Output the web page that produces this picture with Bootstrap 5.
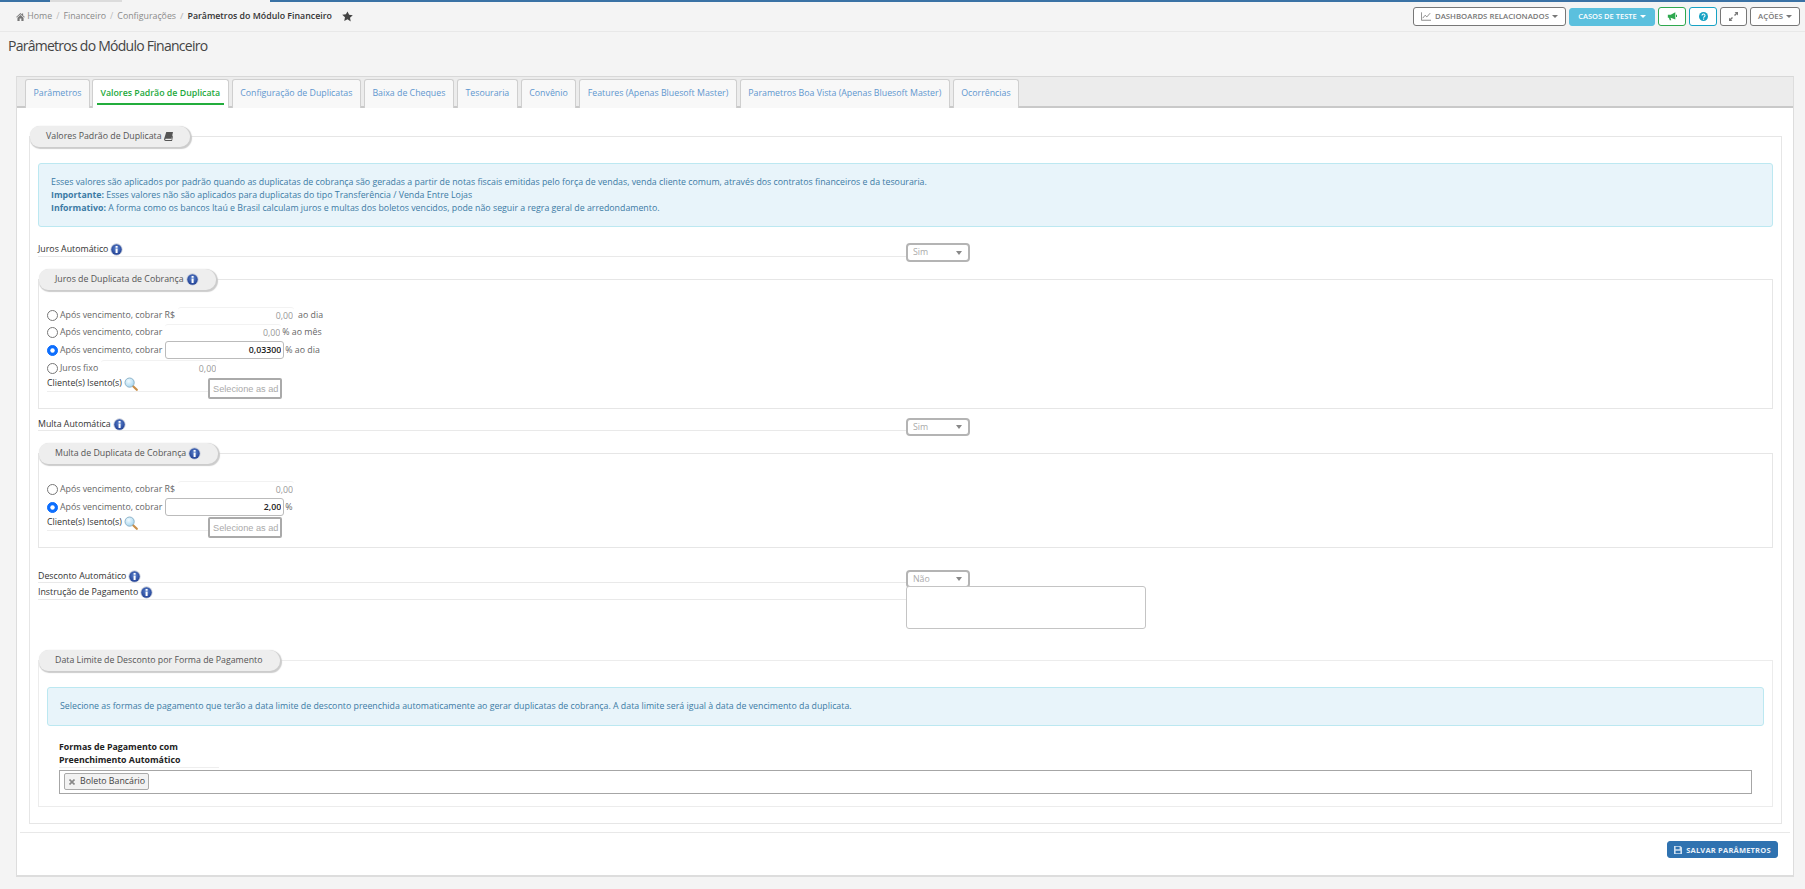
<!DOCTYPE html>
<html lang="pt-BR">
<head>
    <meta charset="UTF-8">
    <meta name="viewport" content="width=device-width, initial-scale=1.0">
    <title>Parâmetros do Módulo Financeiro</title>
    <link href="https://cdn.jsdelivr.net/npm/bootstrap@5.3.3/dist/css/bootstrap.min.css" rel="stylesheet">
    <script src="https://cdn.jsdelivr.net/npm/bootstrap@5.3.3/dist/js/bootstrap.bundle.min.js"></script>
    <style>
        html, body { height: 889px; overflow: hidden; }
        body { background: #f4f4f4; font-family: "Open Sans", sans-serif; font-size: 8.8px; line-height: 13px; color: #333; }

        /* faixa do topo */
        .faixa-topo { height: 2px; background: #3a72a5; }
        .faixa-topo span { height: 2px; background: #dcdcdc; }
        .faixa-a { margin-left: 50px; width: 36px; }
        .faixa-b { width: 36px; }
        .faixa-c { width: 148px; background: #f4f4f4 !important; }

        .barra-topo { height: 30px; border-bottom: 1px solid #e8e8e8; padding: 0 5px 0 16px; }
        .breadcrumb { font-size: 8.8px; margin: 0; --bs-breadcrumb-divider-color: #bbb; --bs-breadcrumb-item-padding-x: 4px; }
        .breadcrumb a { color: #8a8a8a; text-decoration: none; }
        .breadcrumb .active { color: #333; font-weight: 600; }
        .estrela { margin-left: 10px; }

        .btn-topo { font-size: 7.8px; line-height: 11px; font-weight: 600; padding: 3px 6px; border: 1px solid #777; border-radius: 3px; background: #fff; color: #777; height: 19px; white-space: nowrap; display: inline-flex; align-items: center; justify-content: center; }
        .btn-topo:hover { background: #fff; color: #777; }
        .btn-topo.dropdown-toggle::after { border-top-width: 3px; border-left-width: 3px; border-right-width: 3px; margin-left: 3px; vertical-align: 1px; }
        .btn-dash { width: 153px; margin-right: 3px; }
        .btn-casos { width: 86px; height: 18px; margin-right: 3px; background: #5bc0de; border-color: #5bc0de; color: #fff; font-size: 7.5px; }
        .btn-casos:hover { background: #5bc0de; color: #fff; }
        .btn-icone { width: 28px; margin-right: 3px; padding: 0; }
        .btn-verde { border-color: #2fa84f; }
        .btn-ciano { border-color: #17a2c4; }
        .btn-expandir { width: 27px; }
        .btn-acoes { width: 50px; }

        .titulo-pagina { font-size: 14px; line-height: 20px; font-weight: 400; letter-spacing: -.74px; margin: 4px 0 20px 8px; color: #444; }

        /* painel */
        .painel { margin: 0 11px 0 16px; height: 801px; background: #fff; border: 1px solid #ddd; border-top-color: #d8d8d8; border-bottom-width: 2px; }
        .nav-abas { background: #ececec; height: 31px; padding: 2px 0 0 8px; border-bottom: 2px solid #c9c9c9; flex-wrap: nowrap; gap: 3px; }
        .nav-abas .nav-link { height: 29px; font-size: 8.8px; line-height: 13px; color: #5f97cf; background: #f8f8f8; border: 1px solid #cfcfcf; border-bottom: 0; border-radius: 3px 3px 0 0; padding: 7px 7.5px 0; white-space: nowrap; }
        .nav-abas .nav-link.active { color: #23a93c; font-weight: 600; background: #fff; position: relative; margin-left: -1px; }
        .nav-abas .nav-link.active::after { content: ""; position: absolute; left: 4px; right: 4px; bottom: 3px; height: 2px; background: #23ad3c; }

        /* caixas com legenda */
        .caixa { border: 1px solid #e6e6e6; }
        .caixa-externa { margin: 28px 11px 0 12px; height: 688px; padding: 0 8px; }
        .caixa-juros { height: 130px; margin-top: 17px; padding: 0 8px; }
        .caixa-multa { height: 95px; margin-top: 17px; padding: 0 8px; }
        .caixa-data { height: 147px; margin-top: 31px; padding: 0 8px; border-color: #ececec; }
        .pilula { display: flex; align-items: center; width: fit-content; height: 21px; margin: -11px 0 0 -8px; padding: 0 17px 0 16px; background: #eee; border-radius: 9px 11px 10px 9px; box-shadow: 1px 1px 1px 1px #ccc; color: #555; gap: 2px; }

        .aviso { padding: 12px; margin: 0; font-size: 8.8px; line-height: 13px; background: #e8f4fa; border: 1px solid #bce8f1; border-radius: 3px; color: #3c7ba5; }
        .aviso-a { margin-top: 16px; height: 64px; }
        .aviso-b { height: 39px; margin-top: 16px; }

        .linha-campo { display: flex; align-items: flex-start; }
        .rotulo { height: 14px; border-bottom: 1px solid #e9e9e9; display: flex; align-items: center; gap: 2px; color: #333; white-space: nowrap; }
        .rotulo-largo { width: 868px; }
        .seletor { width: 64px; height: 19px; padding: 0 5px; font-size: 8.8px; color: #aaa; border: 2px solid #b4b4b4; border-radius: 4px; background: #fff url("data:image/svg+xml,%3Csvg xmlns='http://www.w3.org/2000/svg' width='6' height='4'%3E%3Cpath d='M0 0h6L3 4z' fill='%23888'/%3E%3C/svg%3E") no-repeat right 6px center; appearance: none; font-family: "Open Sans", sans-serif; }
        .juros-auto { margin-top: 16px; }
        .multa-auto { margin-top: 9px; }
        .multa-auto .seletor { height: 18px; }
        .multa-auto .rotulo { height: 13px; }
        .desc-auto { margin-top: 22px; }
        .desc-auto .seletor { height: 18px; }
        .desc-auto .rotulo { height: 13px; }
        .instrucao { margin-top: -2px; }
        .area-instrucao { width: 240px; height: 43px; border: 1px solid #c4c4c4; border-radius: 3px; resize: none; display: block; background: #fff; }

        .radios { margin-top: 17px; }
        .opcao { display: flex; align-items: center; height: 17px; white-space: nowrap; color: #666; }
        .opcao-alta { height: 18px; }
        .opcao .form-check-input { width: 11px; height: 11px; margin: 0 2px 0 0; border-color: #777; flex: none; }
        .opcao .form-check-input:checked { background-color: #0d6efd; border-color: #0d6efd; }
        .valor { width: 116px; height: 17px; margin-left: 3px; border: 0; border-top: 1px solid #f2f2f2; border-radius: 3px; text-align: right; padding: 0 1px 0 0; font-size: 8.8px; color: #999; background: #fff; font-family: "Open Sans", sans-serif; }
        .valor-ativo { width: 119px; height: 18px; border: 1px solid #bbb; color: #222; font-weight: 600; padding-right: 2px; }
        .sufixo { color: #666; margin-left: 1px; }
        .sufixo-dia { margin-left: 4px; }

        .isentos { display: flex; align-items: flex-start; }
        .rotulo-isento { width: 161px; height: 15px; border-bottom: 1px solid #eee; display: flex; align-items: flex-start; gap: 2px; }
        .caixa-selecao { width: 74px; height: 21px; margin-top: 1px; border: 2px solid #aaa; border-radius: 2px; font-family: "Liberation Sans", sans-serif; font-size: 9.2px; color: #aaa; padding: 3px; overflow: hidden; white-space: nowrap; background: #fff; }

        .rotulo-formas { width: 160px; margin: 15px 0 0 12px; height: 27px; border-bottom: 1px solid #eee; font-weight: 700; color: #222; line-height: 13px; }
        .caixa-multipla { margin: 2px 0 0 12px; width: 1693px; height: 24px; border: 1px solid #a6a6a6; padding: 2px 4px; background: #fff; }
        .etiqueta { display: inline-flex; align-items: center; gap: 5px; width: 85px; height: 17px; padding: 0 4px; border: 1px solid #aaa; border-radius: 2px; background: #f2f2f2; color: #444; white-space: nowrap; }
        .etiqueta svg { flex: none; }

        .rodape-painel { margin: 8px 3px 0 3px; border-top: 1px solid #e8e8e8; padding: 8px 12px 0 0; }
        .btn-salvar { width: 111px; height: 17px; padding: 0; background: #2f72b0; border: 1px solid #2f72b0; border-radius: 3px; color: #e8f0f8; font-size: 7.5px; line-height: 10px; font-weight: 700; display: flex; align-items: center; justify-content: center; gap: 4px; letter-spacing: .2px; }
        .btn-salvar:hover { background: #2f72b0; color: #e8f0f8; }
    </style>
</head>
<body>

<svg width="0" height="0" class="d-block position-absolute">
    <defs>
        <radialGradient id="azulInfo" cx="50%" cy="40%" r="60%">
            <stop offset="0" stop-color="#5f86cf"/>
            <stop offset="1" stop-color="#1f3f94"/>
        </radialGradient>
        <radialGradient id="vidro" cx="40%" cy="35%" r="70%">
            <stop offset="0" stop-color="#f2fbff"/>
            <stop offset="1" stop-color="#a3d4ef"/>
        </radialGradient>
        <symbol id="icoInfo" viewBox="0 0 14 14">
            <circle cx="7" cy="7" r="6.6" fill="#c9cfdc"/>
            <circle cx="7" cy="7" r="5.6" fill="url(#azulInfo)"/>
            <rect x="6" y="6" width="2.2" height="4.8" fill="#fff"/>
            <rect x="6" y="3.2" width="2.2" height="1.9" fill="#fff"/>
        </symbol>
        <symbol id="icoLupa" viewBox="0 0 14 14">
            <path d="M8.6 8.8l4.2 4" stroke="#c98f4a" stroke-width="2.2" stroke-linecap="round"/>
            <circle cx="5.6" cy="5.6" r="4.6" fill="url(#vidro)" stroke="#8fb4c9"/>
        </symbol>
    </defs>
</svg>

<div class="faixa-topo d-flex">
    <span class="faixa-a"></span><span class="faixa-b"></span><span class="faixa-c"></span>
</div>

<div class="barra-topo d-flex align-items-center justify-content-between">
    <div class="d-flex align-items-center">
        <ol class="breadcrumb">
            <li class="breadcrumb-item">
                <svg width="9" height="8" viewBox="0 0 12 11" fill="#777"><path d="M6 0L0 5.4l.7.8L6 1.6l5.3 4.6.7-.8L9.6 3.300V.6H8v1.300zM1.800 6.600V11h3V7.600h2.400V11h3V6.600L6 2.900z"/></svg>
                <a href="#">Home</a>
            </li>
            <li class="breadcrumb-item"><a href="#">Financeiro</a></li>
            <li class="breadcrumb-item"><a href="#">Configurações</a></li>
            <li class="breadcrumb-item active">Parâmetros do Módulo Financeiro</li>
        </ol>
        <svg class="estrela" width="11" height="11" viewBox="0 0 20 20" fill="#444"><path d="M10 .8l2.900 6.200 6.700.8-5 4.600 1.300 6.700L10 15l-5.900 3.100 1.300-6.700-5-4.600 6.700-.8z"/></svg>
    </div>
    <div class="d-flex align-items-center">
        <button type="button" class="btn btn-topo btn-dash dropdown-toggle">
            <svg class="me-1" width="10" height="9" viewBox="0 0 12 10" fill="none" stroke="#777"><path d="M.5 0v9.500H12M2 7l3-3.500 2 2L11 1"/></svg>DASHBOARDS RELACIONADOS
        </button>
        <button type="button" class="btn btn-topo btn-casos dropdown-toggle">CASOS DE TESTE</button>
        <button type="button" class="btn btn-topo btn-icone btn-verde">
            <svg width="10" height="9" viewBox="0 0 12 10" fill="#2fa84f"><path d="M1 3h3.500L10 0v8.500L4.500 6.500H4.200l.9 3H3.300l-1-3H1zM10.800 3H12v2.500h-1.200z"/></svg>
        </button>
        <button type="button" class="btn btn-topo btn-icone btn-ciano">
            <svg width="9" height="9" viewBox="0 0 12 12"><circle cx="6" cy="6" r="6" fill="#17a2c4"/><path d="M4 4.600a2 2 0 1 1 3.100 1.700c-.7.4-1 .7-1 1.500" fill="none" stroke="#fff" stroke-width="1.400"/><rect x="5.300" y="8.600" width="1.600" height="1.600" fill="#fff"/></svg>
        </button>
        <button type="button" class="btn btn-topo btn-icone btn-expandir">
            <svg width="9" height="9" viewBox="0 0 12 12" fill="#777"><path d="M7.500 0H12v4.500L10.400 2.900 8 5.300 6.700 4 9.100 1.600zM4.500 12H0V7.500l1.600 1.600L4 6.700 5.300 8 2.900 10.400z"/></svg>
        </button>
        <button type="button" class="btn btn-topo btn-acoes dropdown-toggle">AÇÕES</button>
    </div>
</div>

<h1 class="titulo-pagina">Parâmetros do Módulo Financeiro</h1>

<div class="painel">
    <ul class="nav nav-abas">
        <li class="nav-item"><a class="nav-link" href="#">Parâmetros</a></li>
        <li class="nav-item"><a class="nav-link active" href="#">Valores Padrão de Duplicata</a></li>
        <li class="nav-item"><a class="nav-link" href="#">Configuração de Duplicatas</a></li>
        <li class="nav-item"><a class="nav-link" href="#">Baixa de Cheques</a></li>
        <li class="nav-item"><a class="nav-link" href="#">Tesouraria</a></li>
        <li class="nav-item"><a class="nav-link" href="#">Convênio</a></li>
        <li class="nav-item"><a class="nav-link" href="#">Features (Apenas Bluesoft Master)</a></li>
        <li class="nav-item"><a class="nav-link" href="#">Parametros Boa Vista (Apenas Bluesoft Master)</a></li>
        <li class="nav-item"><a class="nav-link" href="#">Ocorrências</a></li>
    </ul>

    <div class="caixa caixa-externa">
        <div class="pilula">
            Valores Padrão de Duplicata
            <svg width="9" height="9" viewBox="0 0 12 12" fill="#555"><path d="M3 0h9l-2 9H2.500C1.800 9 1.500 9.500 1.600 10c.1.500.5.800 1 .8H10l1.200-6 .8.500-1.300 6.700H2.200C1 12 .2 11 .1 10c0-.4 0-.7.100-1z"/></svg>
        </div>

        <div class="alert aviso aviso-a">
            Esses valores são aplicados por padrão quando as duplicatas de cobrança são geradas a partir de notas fiscais emitidas pelo força de vendas, venda cliente comum, através dos contratos financeiros e da tesouraria.<br>
            <b>Importante:</b> Esses valores não são aplicados para duplicatas do tipo Transferência / Venda Entre Lojas<br>
            <b>Informativo:</b> A forma como os bancos Itaú e Brasil calculam juros e multas dos boletos vencidos, pode não seguir a regra geral de arredondamento.
        </div>

        <div class="linha-campo juros-auto">
            <div class="rotulo rotulo-largo">Juros Automático <svg width="13" height="13"><use href="#icoInfo"/></svg></div>
            <select class="seletor" disabled><option>Sim</option></select>
        </div>

        <div class="caixa caixa-juros">
            <div class="pilula">
                Juros de Duplicata de Cobrança <svg width="13" height="13"><use href="#icoInfo"/></svg>
            </div>
            <div class="radios">
                <div class="opcao">
                    <input class="form-check-input" type="radio" name="juros">Após vencimento, cobrar R$
                    <input class="valor" type="text" value="0,00" readonly><span class="sufixo sufixo-dia">ao dia</span>
                </div>
                <div class="opcao">
                    <input class="form-check-input" type="radio" name="juros">Após vencimento, cobrar
                    <input class="valor" type="text" value="0,00" readonly><span class="sufixo">% ao mês</span>
                </div>
                <div class="opcao opcao-alta">
                    <input class="form-check-input" type="radio" name="juros" checked>Após vencimento, cobrar
                    <input class="valor valor-ativo" type="text" value="0,03300" readonly><span class="sufixo">% ao dia</span>
                </div>
                <div class="opcao opcao-alta">
                    <input class="form-check-input" type="radio" name="juros">Juros fixo
                    <input class="valor" type="text" value="0,00" readonly>
                </div>
            </div>
            <div class="isentos">
                <div class="rotulo-isento">Cliente(s) Isento(s) <svg width="14" height="14"><use href="#icoLupa"/></svg></div>
                <div class="caixa-selecao">Selecione as ad</div>
            </div>
        </div>

        <div class="linha-campo multa-auto">
            <div class="rotulo rotulo-largo">Multa Automática <svg width="13" height="13"><use href="#icoInfo"/></svg></div>
            <select class="seletor" disabled><option>Sim</option></select>
        </div>

        <div class="caixa caixa-multa">
            <div class="pilula">
                Multa de Duplicata de Cobrança <svg width="13" height="13"><use href="#icoInfo"/></svg>
            </div>
            <div class="radios">
                <div class="opcao">
                    <input class="form-check-input" type="radio" name="multa">Após vencimento, cobrar R$
                    <input class="valor" type="text" value="0,00" readonly>
                </div>
                <div class="opcao opcao-alta">
                    <input class="form-check-input" type="radio" name="multa" checked>Após vencimento, cobrar
                    <input class="valor valor-ativo" type="text" value="2,00" readonly><span class="sufixo">%</span>
                </div>
            </div>
            <div class="isentos">
                <div class="rotulo-isento">Cliente(s) Isento(s) <svg width="14" height="14"><use href="#icoLupa"/></svg></div>
                <div class="caixa-selecao">Selecione as ad</div>
            </div>
        </div>

        <div class="linha-campo desc-auto">
            <div class="rotulo rotulo-largo">Desconto Automático <svg width="13" height="13"><use href="#icoInfo"/></svg></div>
            <select class="seletor" disabled><option>Não</option></select>
        </div>
        <div class="linha-campo instrucao">
            <div class="rotulo rotulo-largo">Instrução de Pagamento <svg width="13" height="13"><use href="#icoInfo"/></svg></div>
            <textarea class="area-instrucao" disabled></textarea>
        </div>

        <div class="caixa caixa-data">
            <div class="pilula">Data Limite de Desconto por Forma de Pagamento</div>
            <div class="alert aviso aviso-b">
                Selecione as formas de pagamento que terão a data limite de desconto preenchida automaticamente ao gerar duplicatas de cobrança. A data limite será igual à data de vencimento da duplicata.
            </div>
            <div class="rotulo-formas">Formas de Pagamento com<br>Preenchimento Automático</div>
            <div class="caixa-multipla">
                <span class="etiqueta">
                    <svg width="6" height="6" viewBox="0 0 6 6"><path d="M.5.500l5 5M5.500.500l-5 5" stroke="#888" stroke-width="1.600"/></svg>
                    Boleto Bancário
                </span>
            </div>
        </div>
    </div>

    <div class="rodape-painel d-flex justify-content-end">
        <button type="button" class="btn btn-salvar">
            <svg width="8" height="8" viewBox="0 0 10 10" fill="#cfe0f0"><path d="M0 0h8l2 2v8H0zM2 1v3h5V1zM2 6v3h6V6z"/></svg>SALVAR PARÂMETROS
        </button>
    </div>
</div>

</body>
</html>
